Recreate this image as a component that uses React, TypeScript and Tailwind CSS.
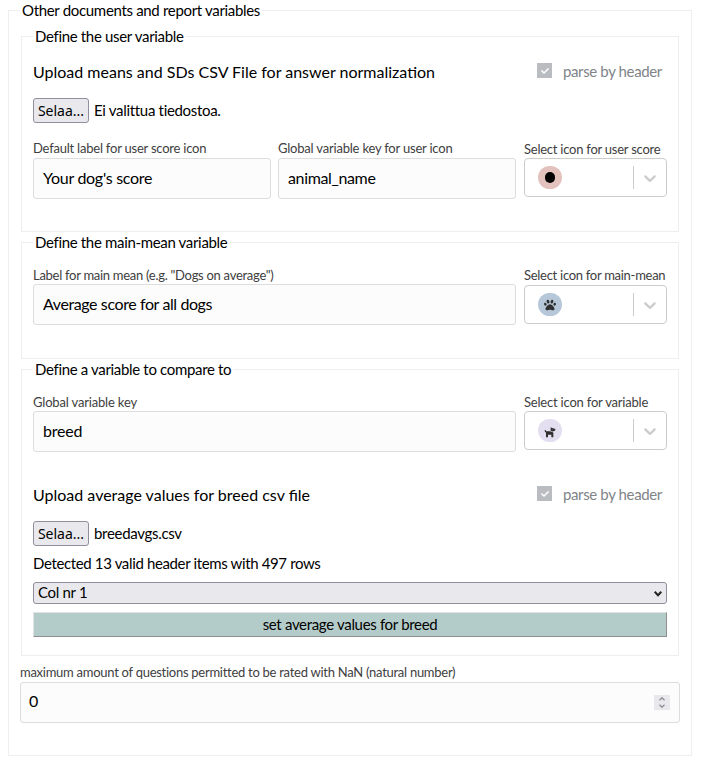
import type { ReactNode } from "react";
import { FaCheck, FaDog, FaPaw } from "react-icons/fa";

function Group({ title, className, children }: { title: string; className: string; children: ReactNode }) {
  return (
    <fieldset className={`mx-px border border-[#eeeeee] px-[11px] ${className}`}>
      <legend className="h-[21px] whitespace-nowrap px-0.5 text-[15px] leading-[21px] tracking-[-0.33px]">{title}</legend>
      {children}
    </fieldset>
  );
}

type FieldProps = { label: string; value: string; className: string; labelClass: string; inputClass: string };

function TextField({ label, value, className, labelClass, inputClass }: FieldProps) {
  return (
    <label className={`flex flex-col ${className}`}>
      <span className={`h-[19px] whitespace-nowrap text-[13px] text-[#404040] ${labelClass}`}>{label}</span>
      <input
        readOnly
        value={value}
        className={`h-[41px] w-full rounded-[3px] border border-[#dddddd] bg-[#fcfcfc] px-[9px] pb-0.5 text-[16px] outline-none ${inputClass}`}
      />
    </label>
  );
}

function IconSelect({ label, color, labelClass, children }: { label: string; color: string; labelClass: string; children: ReactNode }) {
  return (
    <div className="w-[143px]">
      <div className={`h-[19px] whitespace-nowrap text-[13px] leading-[21px] text-[#404040] ${labelClass}`}>{label}</div>
      <div className="flex h-[39px] items-center rounded border border-[#cccccc] bg-white">
        <div className={`ml-[13px] flex h-[23px] w-6 items-center justify-center rounded-full ${color}`}>{children}</div>
        <div className="ml-auto h-[23px] w-px bg-[#cccccc]" />
        <svg viewBox="0 0 20 20" className="mx-1.5 size-5 fill-[#cccccc]">
          <path d="M4.516 7.548c0.436-0.446 1.043-0.481 1.576 0l3.908 3.747 3.908-3.747c0.533-0.481 1.141-0.446 1.574 0 0.436 0.445 0.408 1.197 0 1.615-0.406 0.418-4.695 4.502-4.695 4.502-0.217 0.223-0.502 0.335-0.787 0.335s-0.57-0.112-0.789-0.335c0 0-4.287-4.084-4.695-4.502s-0.436-1.17 0-1.615z" />
        </svg>
      </div>
    </div>
  );
}

function UploadHeader({ title }: { title: string }) {
  return (
    <div className="flex h-[26px] items-center justify-between">
      <h2 className="whitespace-nowrap text-[16px] leading-[26px]">{title}</h2>
      <div className="flex w-[130px] items-center text-[#808488]">
        <span className="-mt-[3px] flex size-[15px] items-center justify-center bg-[#b9bdc1]">
          <FaCheck className="size-2 text-white" />
        </span>
        <span className="-mt-0.5 ml-[11px] whitespace-nowrap text-[15px] leading-[26px] tracking-[-0.37px]">parse by header</span>
      </div>
    </div>
  );
}

function FilePicker({ file }: { file: string }) {
  return (
    <div className="flex h-[25px] items-center text-[15px]">
      <button className="h-[25px] w-14 rounded-[3px] border border-[#8f8f9d] bg-[#e9e9ed] font-['Noto_Sans',sans-serif] text-[14px] leading-[23px]">
        Selaa...
      </button>
      <span className="ml-[5px] leading-[25px] tracking-[-0.31px]">{file}</span>
    </div>
  );
}

export default function App() {
  return (
    <main className="h-[770px] w-[701px] overflow-hidden bg-white pl-2 font-['Lato',sans-serif] text-black">
      <fieldset className="h-[756px] w-[684px] border border-[#eeeeee] px-[11px]">
        <legend className="h-[21px] whitespace-nowrap px-0.5 text-[15px] leading-[21px] tracking-[-0.32px]">Other documents and report variables</legend>
        <div className="h-[5px]" />

        <Group title="Define the user variable" className="h-[206px]">
          <div className="pt-[12px]">
            <UploadHeader title="Upload means and SDs CSV File for answer normalization" />
          </div>
          <div className="pt-[13px]">
            <FilePicker file="Ei valittua tiedostoa." />
          </div>
          <div className="flex items-start pt-4">
            <TextField
              label="Default label for user score icon"
              value="Your dog's score"
              className="mr-[7px] w-[238px]"
              labelClass="leading-[19px] tracking-[-0.22px]"
              inputClass="tracking-[-0.28px]"
            />
            <TextField
              label="Global variable key for user icon"
              value="animal_name"
              className="mr-2 w-[238px]"
              labelClass="leading-[19px] tracking-[-0.2px]"
              inputClass="tracking-[-0.36px]"
            />
            <IconSelect label="Select icon for user score" color="bg-[#e3c2bd]" labelClass="tracking-[-0.24px]">
              <span className="h-[11px] w-[10px] rounded-full bg-black" />
            </IconSelect>
          </div>
        </Group>

        <Group title="Define the main-mean variable" className="h-[127px]">
          <div className="flex items-start gap-2 pt-[12px]">
            <TextField
              label={'Label for main mean (e.g. "Dogs on average")'}
              value="Average score for all dogs"
              className="w-[483px]"
              labelClass="leading-[21px] tracking-[-0.28px]"
              inputClass="tracking-[-0.4px]"
            />
            <IconSelect label="Select icon for main-mean" color="bg-[#b5c7d9]" labelClass="mb-px tracking-[-0.28px]">
              <FaPaw className="size-3 text-[#303030]" />
            </IconSelect>
          </div>
        </Group>

        <Group title="Define a variable to compare to" className="h-[297px]">
          <div className="flex items-start gap-2 pt-[12px]">
            <TextField
              label="Global variable key"
              value="breed"
              className="w-[483px]"
              labelClass="leading-[21px] tracking-[-0.17px]"
              inputClass="tracking-[-0.2px]"
            />
            <IconSelect label="Select icon for variable" color="bg-[#e3dff1]" labelClass="tracking-[-0.2px]">
              <FaDog className="mt-0.5 size-3 text-[#303030]" />
            </IconSelect>
          </div>
          <div className="pt-[30px]">
            <UploadHeader title="Upload average values for breed csv file" />
          </div>
          <div className="pt-[13px]">
            <FilePicker file="breedavgs.csv" />
          </div>
          <p className="mt-2 h-5 text-[15px] leading-[18px] tracking-[-0.36px]">Detected 13 valid header items with 497 rows</p>
          <div className="mt-2 flex h-[22px] items-center justify-between rounded-[3px] border border-[#8f8f9d] bg-[#e9e9ed] pl-1 pr-1 text-[15px] leading-5">
            <span className="-mt-0.5 tracking-[-0.3px]">Col nr 1</span>
            <svg viewBox="0 0 8 6" className="mt-0.5 h-1.5 w-2 fill-none stroke-[#222222] stroke-2">
              <path d="M.7.8 4 4.3 7.3.8" />
            </svg>
          </div>
          <button className="mt-2 block h-[25px] w-full border border-b-[#8f8f8f] border-l-[#e3e3e3] border-r-[#8f8f8f] border-t-[#e3e3e3] bg-[#b4ccc9] text-[15px] leading-[23px] tracking-[-0.32px]">
            set average values for breed
          </button>
        </Group>

        <div className="pt-[7px]">
          <div className="h-[19px] whitespace-nowrap text-[13px] leading-[19px] tracking-[-0.27px] text-[#404040]">
            maximum amount of questions permitted to be rated with NaN (natural number)
          </div>
          <div className="flex h-[41px] items-center justify-between rounded-[3px] border border-[#dddddd] bg-[#fcfcfc] pl-2 pr-[9px] text-[16px]">
            <span className="-mt-[3px]">0</span>
            <span className="flex h-[15px] w-4 items-center justify-center bg-[#e9e9ed]">
              <svg viewBox="0 0 6 11" className="h-[11px] w-1.5 fill-none stroke-[#8b8b94] stroke-[1.3]">
                <path d="M.5 3.2 3 .8 5.5 3.2M.5 7.8 3 10.2 5.5 7.8" />
              </svg>
            </span>
          </div>
        </div>
      </fieldset>
    </main>
  );
}
